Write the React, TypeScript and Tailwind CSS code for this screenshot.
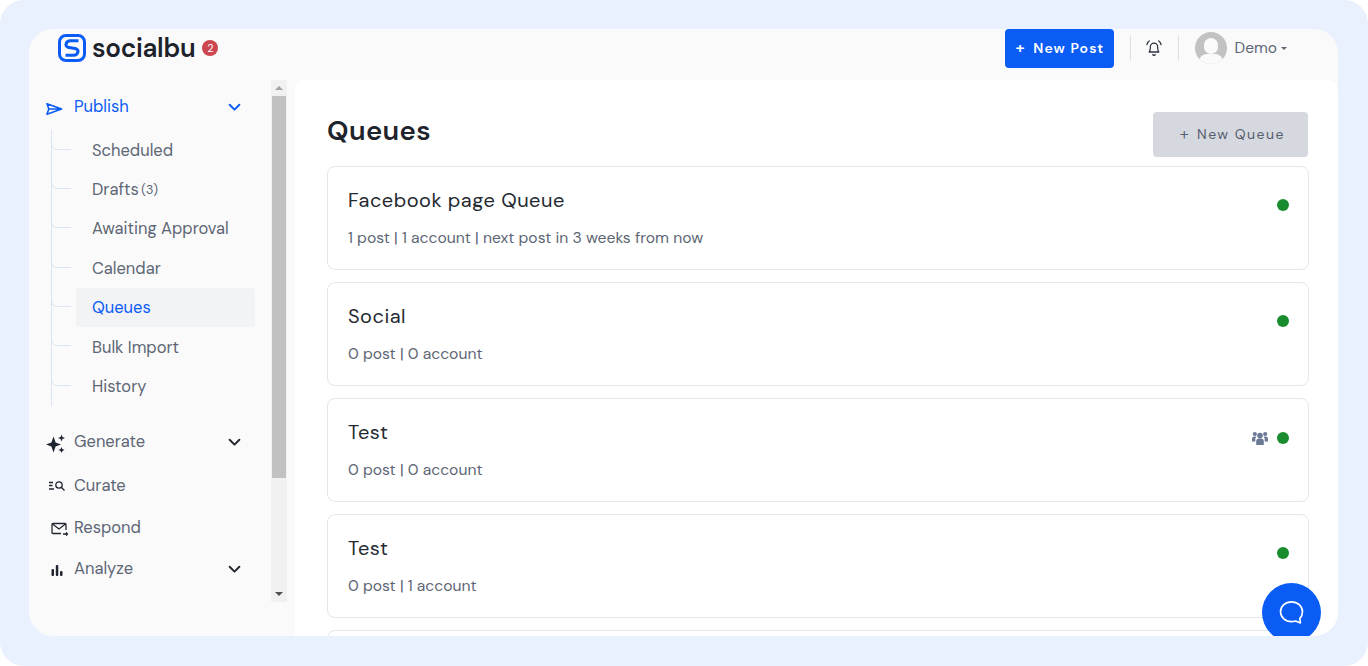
import React from "react";

const font = { fontFamily: '"DM Sans", Inter, "Noto Sans", sans-serif' };

function Chevron({ className }: { className: string }) {
  return (
    <svg viewBox="0 0 12 8" className={className} fill="none" stroke="currentColor" strokeWidth="1.8" strokeLinecap="round" strokeLinejoin="round">
      <path d="M1.5 1.5 6 6l4.5-4.5" />
    </svg>
  );
}

function Logo() {
  return (
    <svg viewBox="0 0 28 28" className="w-[28px] h-[28px]" fill="none">
      <rect x="1.5" y="1.5" width="25" height="25" rx="6.5" stroke="#0a5cf5" strokeWidth="3" />
      <path d="M20.500 6.800H12.200C8 6.800 6.600 11.800 9.800 13.200L18.200 14.800C21.400 16.200 20 21.200 15.800 21.200H7.500" stroke="#0a5cf5" strokeWidth="3" />
    </svg>
  );
}

function SubItem({ label, count, active }: { label: string; count?: string; active?: boolean }) {
  return (
    <div className="relative h-[39.4px] flex items-center">
      <svg viewBox="0 0 20 8" className="absolute left-0 top-[12px] w-[20px] h-[8px]" fill="none">
        <path d="M0.500 0q0 6.500 6 6.500H20" stroke="#dbe5f5" strokeWidth="1" />
      </svg>
      <div className={`ml-[25px] w-[179px] h-[39px] flex items-center pl-[16px] pt-[1.500px] rounded-[3px] text-[16.5px] ${active ? "bg-[#f2f3f5] text-[#0a5cf5]" : "text-[#5d6675]"}`}>
        {label}
        {count && <span className="ml-[2.500px] text-[12.500px]">{count}</span>}
      </div>
    </div>
  );
}

function NavItem({ icon, label, chevron, active, className }: { icon: React.ReactNode; label: string; chevron?: boolean; active?: boolean; className?: string }) {
  return (
    <div className={`flex items-center h-[24px] pl-[14px] ${className ?? ""}`}>
      <div className="w-[28px] flex justify-start shrink-0">{icon}</div>
      <span className={`text-[16.5px] ${active ? "text-[#0a5cf5]" : "text-[#5d6675]"}`}>{label}</span>
      {chevron && <Chevron className={`ml-auto mr-[14.5px] w-[13px] h-[9px] ${active ? "text-[#0a5cf5]" : "text-[#23272f]"}`} />}
    </div>
  );
}

function QueueCard({ title, meta, team }: { title: string; meta: string; team?: boolean }) {
  return (
    <div className="relative shrink-0 h-[104px] rounded-[8px] border border-[#e5e7ee] bg-white pl-[20px] pt-[20px]">
      <div className="h-[26px] text-[20px] leading-[26px] tracking-[0.5px] text-[#252a32]">{title}</div>
      <div className="mt-[15px] text-[15.7px] leading-[20px] text-[#5d6675]">{meta}</div>
      <div className="absolute right-[19.500px] top-[32px] flex items-center gap-[9px]">
        {team && (
          <svg viewBox="0 0 16 14" className="w-[16px] h-[14px]" fill="#6b7a94">
            <circle cx="8" cy="4.600" r="2.800" />
            <circle cx="2.800" cy="3" r="2.100" />
            <circle cx="13.200" cy="3" r="2.100" />
            <path d="M4.200 14V10.500a3 3 0 0 1 3-3h1.600a3 3 0 0 1 3 3V14z" />
            <path d="M0 8a2.500 2.500 0 0 1 2.500-2.500H4.600A4 4 0 0 0 3.300 9v1.500H0z" />
            <path d="M16 8a2.500 2.500 0 0 0-2.500-2.500h-2.100A4 4 0 0 1 12.700 9v1.500H16z" />
          </svg>
        )}
        <span className="w-[12px] h-[12px] rounded-full bg-[#1a8c30]" />
      </div>
    </div>
  );
}

export default function App() {
  return (
    <div style={font} className="w-[1368px] h-[666px] overflow-hidden bg-white">
      <div className="relative w-full h-full rounded-[24px] bg-[#e9f0fe] pt-[29px] pl-[29px] pr-[30px] pb-[30px]">
        <div className="flex flex-col w-full h-full rounded-[24px] bg-[#fafafa] overflow-hidden">
          <header className="flex items-center h-[51px] shrink-0 pl-[29px] pb-[13px]">
            <Logo />
            <span className="ml-[6px] text-[26px] font-semibold leading-none tracking-[-0.3px] text-[#1d222b]">socialbu</span>
            <span className="ml-[7px] w-[16px] h-[16px] rounded-full bg-[#cc4650] flex items-center justify-center text-[11px] text-white">2</span>
            <button className="ml-auto flex items-center pl-[11px] w-[109px] h-[39px] rounded-[4px] bg-[#0a5cf5] text-white text-[14px] font-semibold tracking-[1.100px]">
              <span className="text-[16px]">+</span>
              <span className="ml-[7.500px]">New Post</span>
            </button>
            <div className="ml-[16px] w-px h-[24px] bg-[#dcdfe4]" />
            <svg viewBox="1 1 14 14" className="ml-[15px] w-[16px] h-[16px]" fill="none" stroke="#2c3340" strokeWidth="1.100" strokeLinecap="round" strokeLinejoin="round">
              <path d="M3.800 11.500c.8-1 1-1.800 1-3.500V7a3.200 3.200 0 0 1 6.400 0v1c0 1.700.2 2.500 1 3.500z" />
              <path d="M7 13.500a1 1 0 0 0 2 0" />
              <path d="M1.800 5A5 5 0 0 1 3.800 1.800M14.200 5a5 5 0 0 0-2-3.200" />
            </svg>
            <div className="ml-[16px] w-px h-[24px] bg-[#dcdfe4]" />
            <div className="relative ml-[16px] w-[32px] h-[32px] rounded-full bg-[#c2c2c2] overflow-hidden">
              <div className="absolute left-[9px] top-[6px] w-[14px] h-[16px] rounded-full bg-[#fafafa]" />
              <div className="absolute left-[4px] top-[22px] w-[24px] h-[16px] rounded-full bg-[#fafafa]" />
            </div>
            <span className="ml-[8px] mt-[1px] text-[15.500px] text-[#5d6675]">Demo</span>
            <span className="ml-[4px] w-0 h-0 border-x-[3px] border-x-transparent border-t-[3px] border-t-[#5d6675]" />
            <div className="w-[51px]" />
          </header>
          <div className="flex flex-1 min-h-0">
            <aside className="relative w-[266px] shrink-0 flex">
              <nav className="w-[226px] shrink-0 pl-[3px] pt-[15px]">
                <NavItem
                  active
                  chevron
                  label="Publish"
                  icon={
                    <svg viewBox="0 0 18 14" className="mt-[3px] w-[17px] h-[14px]" fill="none" stroke="#0a5cf5" strokeWidth="1.700" strokeLinejoin="round">
                      <path d="M1 1.500 16.500 7 1 12.500 3 7zM3 7h13.500" />
                    </svg>
                  }
                />
                <div className="ml-[19px] mt-[10px] relative h-[291px]">
                  <div className="absolute left-0 top-[1px] h-[276px] w-px bg-[#dbe5f5]" />
                  <div className="pt-[1.500px]">
                    <SubItem label="Scheduled" />
                    <SubItem label="Drafts" count="(3)" />
                    <SubItem label="Awaiting Approval" />
                    <SubItem label="Calendar" />
                    <SubItem label="Queues" active />
                    <SubItem label="Bulk Import" />
                    <SubItem label="History" />
                  </div>
                </div>
                <NavItem
                  chevron
                  label="Generate"
                  className="mt-[10px]"
                  icon={
                    <svg viewBox="0 0 20 20" className="mt-[3px] w-[20px] h-[20px]" fill="#1f2530">
                      <path d="M7.500 2.500 9.600 8.400 15 10.500 9.600 12.600 7.500 18.500 5.400 12.600 0 10.500 5.400 8.400z" />
                      <path d="M15.500 0.500 16.400 3.100 19 4 16.400 4.900 15.500 7.500 14.600 4.900 12 4 14.600 3.100z" />
                      <path d="M15.500 13 16.400 15.100 18.500 16 16.400 16.900 15.500 19 14.600 16.900 12.500 16 14.600 15.100z" />
                    </svg>
                  }
                />
                <NavItem
                  label="Curate"
                  className="mt-[20px]"
                  icon={
                    <svg viewBox="0 0 16 12" className="ml-[3px] w-[16px] h-[12px]" fill="none" stroke="#1f2530" strokeWidth="1.300">
                      <circle cx="10" cy="5" r="3.200" />
                      <path d="m12.500 7.500 3 3M0 2.500h4M0 5.500h3.500M0 9h5" />
                    </svg>
                  }
                />
                <NavItem
                  label="Respond"
                  className="mt-[18px]"
                  icon={
                    <svg viewBox="0 0 17 14" className="ml-[5px] mt-[2px] w-[17px] h-[14px]" fill="none" stroke="#1f2530" strokeWidth="1.300">
                      <path d="M10 11.500H2a1 1 0 0 1-1-1v-8a1 1 0 0 1 1-1h12a1 1 0 0 1 1 1V8" />
                      <path d="m1.500 2 6.500 5 6.500-5M12 12h4.500M15 10.500l1.500 1.500-1.500 1.500" />
                    </svg>
                  }
                />
                <NavItem
                  chevron
                  label="Analyze"
                  className="mt-[17px]"
                  icon={
                    <svg viewBox="0 0 12 12" className="ml-[5px] mt-[2px] w-[12px] h-[12px]" fill="#1f2530">
                      <rect x="0.500" y="5" width="2.500" height="7" rx="1" />
                      <rect x="4.800" y="1" width="2.500" height="11" rx="1" />
                      <rect x="9" y="7" width="2.500" height="5" rx="1" />
                    </svg>
                  }
                />
              </nav>
              <div className="ml-[16px] w-[16px] h-[522px] bg-[#f1f1f1] flex flex-col items-center">
                <div className="h-[16px] flex items-center justify-center">
                  <span className="w-0 h-0 border-x-[4px] border-x-transparent border-b-[4px] border-b-[#a3a3a3]" />
                </div>
                <div className="w-[14px] h-[382px] bg-[#c1c1c1]" />
                <div className="mt-auto h-[16px] flex items-center justify-center">
                  <span className="w-0 h-0 border-x-[4px] border-x-transparent border-t-[4px] border-t-[#505050]" />
                </div>
              </div>
            </aside>
            <main className="flex-1 min-w-0 bg-white rounded-tl-[10px] rounded-tr-[10px] pl-[32px] pr-[29px] pt-[32px] overflow-hidden flex flex-col">
              <div className="flex justify-between items-start h-[54px] shrink-0">
                <h1 className="text-[27.500px] font-semibold leading-[38px] tracking-[0.4px] text-[#1f242c]">Queues</h1>
                <button className="mr-[1px] flex items-center pl-[27px] w-[155px] h-[45px] rounded-[4px] bg-[#d5d8df] text-[#555e6e] text-[14px] tracking-[1.500px]">
                  <span className="text-[17px] font-light">+</span>
                  <span className="ml-[7px]">New Queue</span>
                </button>
              </div>
              <div className="flex flex-col gap-[12px]">
                <QueueCard title="Facebook page Queue" meta="1 post | 1 account | next post in 3 weeks from now" />
                <QueueCard title="Social" meta="0 post | 0 account" />
                <QueueCard title="Test" meta="0 post | 0 account" team />
                <QueueCard title="Test" meta="0 post | 1 account" />
                <QueueCard title="" meta="" />
              </div>
            </main>
          </div>
        </div>
        <div className="absolute left-[1262px] top-[583px] w-[59px] h-[53px] overflow-hidden">
          <div className="w-[59px] h-[59px] rounded-full bg-[#0a5cf5] flex items-center justify-center">
            <svg viewBox="0 0 24 24" className="w-[25px] h-[25px]" fill="none" stroke="#fff" strokeWidth="1.600" strokeLinejoin="round">
              <path d="M12 1.800c5.800 0 10.500 4 10.500 9.500 0 3-1 5-2.500 6.500l.5 4.200-4.500-1.800c-1.200.4-2.600.6-4 .6-5.800 0-10.500-4-10.500-9.500S6.200 1.800 12 1.800z" />
            </svg>
          </div>
        </div>
      </div>
    </div>
  );
}
